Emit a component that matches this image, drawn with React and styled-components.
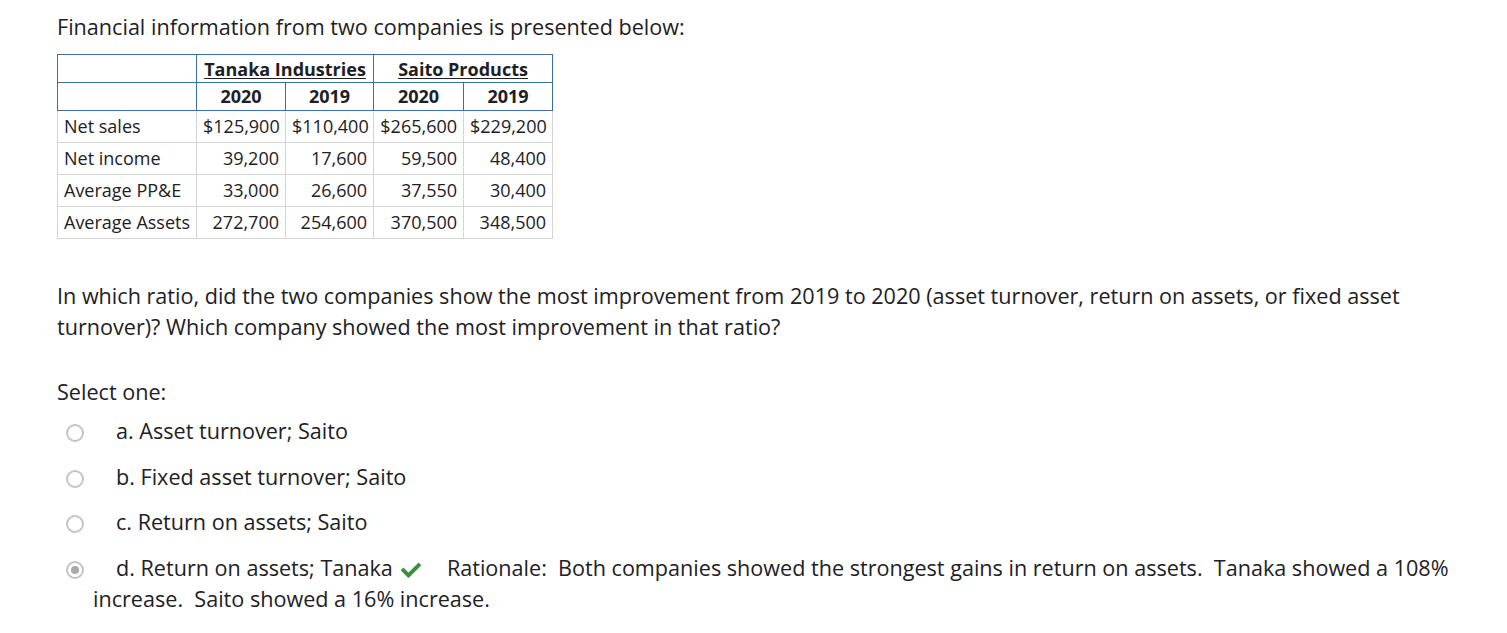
import React from "react";
import styled, { createGlobalStyle } from "styled-components";

const Global = createGlobalStyle`
  html, body { margin: 0; padding: 0; background: #fff; }
  body { font-family: "Open Sans", "Liberation Sans", sans-serif; color: #1d2125; }
`;

const Page = styled.div`
  padding: 11px 0 0 57px;
  width: 1402px;
  font-size: 21.6px;
  line-height: 31px;
`;

const Intro = styled.p`
  margin: 0 0 12px;
`;

const Table = styled.table`
  border-collapse: collapse;
  table-layout: fixed;
  width: 495px;
  font-size: 18px;
  line-height: 24px;
  margin-bottom: 41px;
`;

const Col = styled.col`
  width: ${(p) => p.$w}px;
`;

const HeadCell = styled.th`
  border: 1px solid #3d6f9e;
  font-weight: 700;
  text-align: center;
  padding: ${(p) => (p.$top ? "2px 4px 1px" : "1px 4px 2px")};
  white-space: nowrap;
`;

const Company = styled.span`
  text-decoration: underline;
  text-underline-offset: 2px;
`;

const LabelCell = styled.td`
  border: 1px solid #d4d4d4;
  padding: 3px 6px 4px;
  text-align: left;
  white-space: nowrap;
`;

const NumCell = styled.td`
  border: 1px solid #d4d4d4;
  padding: 3px 6px 4px;
  text-align: right;
  white-space: nowrap;
`;

const Question = styled.p`
  margin: 0 0 34px;
`;

const Prompt = styled.div`
  margin-bottom: 8px;
`;

const Option = styled.div`
  padding-left: 36px;
  text-indent: -27px;
  margin-bottom: ${(p) => (p.$last ? "0" : "14.5px")};
`;

const Radio = styled.span`
  display: inline-block;
  width: 18px;
  height: 18px;
  box-sizing: border-box;
  border-radius: 50%;
  border: 2px solid #c4c4c4;
  background: #fff;
  vertical-align: -3px;
  margin-right: 32px;
  text-indent: 0;
  position: relative;
  &::after {
    content: "";
    display: ${(p) => (p.$checked ? "block" : "none")};
    position: absolute;
    left: 3px;
    top: 3px;
    width: 8px;
    height: 8px;
    border-radius: 50%;
    background: #a9a9a9;
  }
`;

const Check = styled.svg`
  display: inline-block;
  width: 20px;
  height: 17px;
  vertical-align: -2px;
  margin: 0 26px 0 8px;
`;

const options = [
  "a. Asset turnover; Saito",
  "b. Fixed asset turnover; Saito",
  "c. Return on assets; Saito",
];

const rows = [
  ["Net sales", "$125,900", "$110,400", "$265,600", "$229,200"],
  ["Net income", "39,200", "17,600", "59,500", "48,400"],
  ["Average PP&E", "33,000", "26,600", "37,550", "30,400"],
  ["Average Assets", "272,700", "254,600", "370,500", "348,500"],
];

export default function App() {
  return (
    <>
      <Global />
      <Page>
        <Intro>Financial information from two companies is presented below:</Intro>
        <Table>
          <colgroup>
            <Col $w={139} />
            <Col $w={89} />
            <Col $w={88} />
            <Col $w={90} />
            <Col $w={89} />
          </colgroup>
          <thead>
            <tr>
              <HeadCell $top></HeadCell>
              <HeadCell $top colSpan={2}>
                <Company>Tanaka Industries</Company>
              </HeadCell>
              <HeadCell $top colSpan={2}>
                <Company>Saito Products</Company>
              </HeadCell>
            </tr>
            <tr>
              <HeadCell></HeadCell>
              <HeadCell>2020</HeadCell>
              <HeadCell>2019</HeadCell>
              <HeadCell>2020</HeadCell>
              <HeadCell>2019</HeadCell>
            </tr>
          </thead>
          <tbody>
            {rows.map((r) => (
              <tr key={r[0]}>
                <LabelCell>{r[0]}</LabelCell>
                {r.slice(1).map((v, i) => (
                  <NumCell key={i}>{v}</NumCell>
                ))}
              </tr>
            ))}
          </tbody>
        </Table>
        <Question>
          In which ratio, did the two companies show the most improvement from 2019 to 2020
          (asset turnover, return on assets, or fixed asset turnover)? Which company showed the
          most improvement in that ratio?
        </Question>
        <Prompt>Select one:</Prompt>
        {options.map((o) => (
          <Option key={o}>
            <Radio />
            {o}
          </Option>
        ))}
        <Option $last>
          <Radio $checked />
          d. Return on assets; Tanaka
          <Check viewBox="0 0 512 430" aria-hidden="true">
            <path
              fill="#3f8f3f"
              d="M173.9 419.4L7.5 253c-10-10-10-26.2 0-36.2l36.2-36.2c10-10 26.2-10 36.2 0L192 292.7 432.1 52.6c10-10 26.2-10 36.2 0l36.2 36.2c10 10 10 26.2 0 36.2L210.1 419.4c-10 10-26.2 10-36.2 0z"
            />
          </Check>
          Rationale:&nbsp; Both companies showed the strongest gains in return on assets.&nbsp;
          Tanaka showed a 108% increase.&nbsp; Saito showed a 16% increase.
        </Option>
      </Page>
    </>
  );
}
